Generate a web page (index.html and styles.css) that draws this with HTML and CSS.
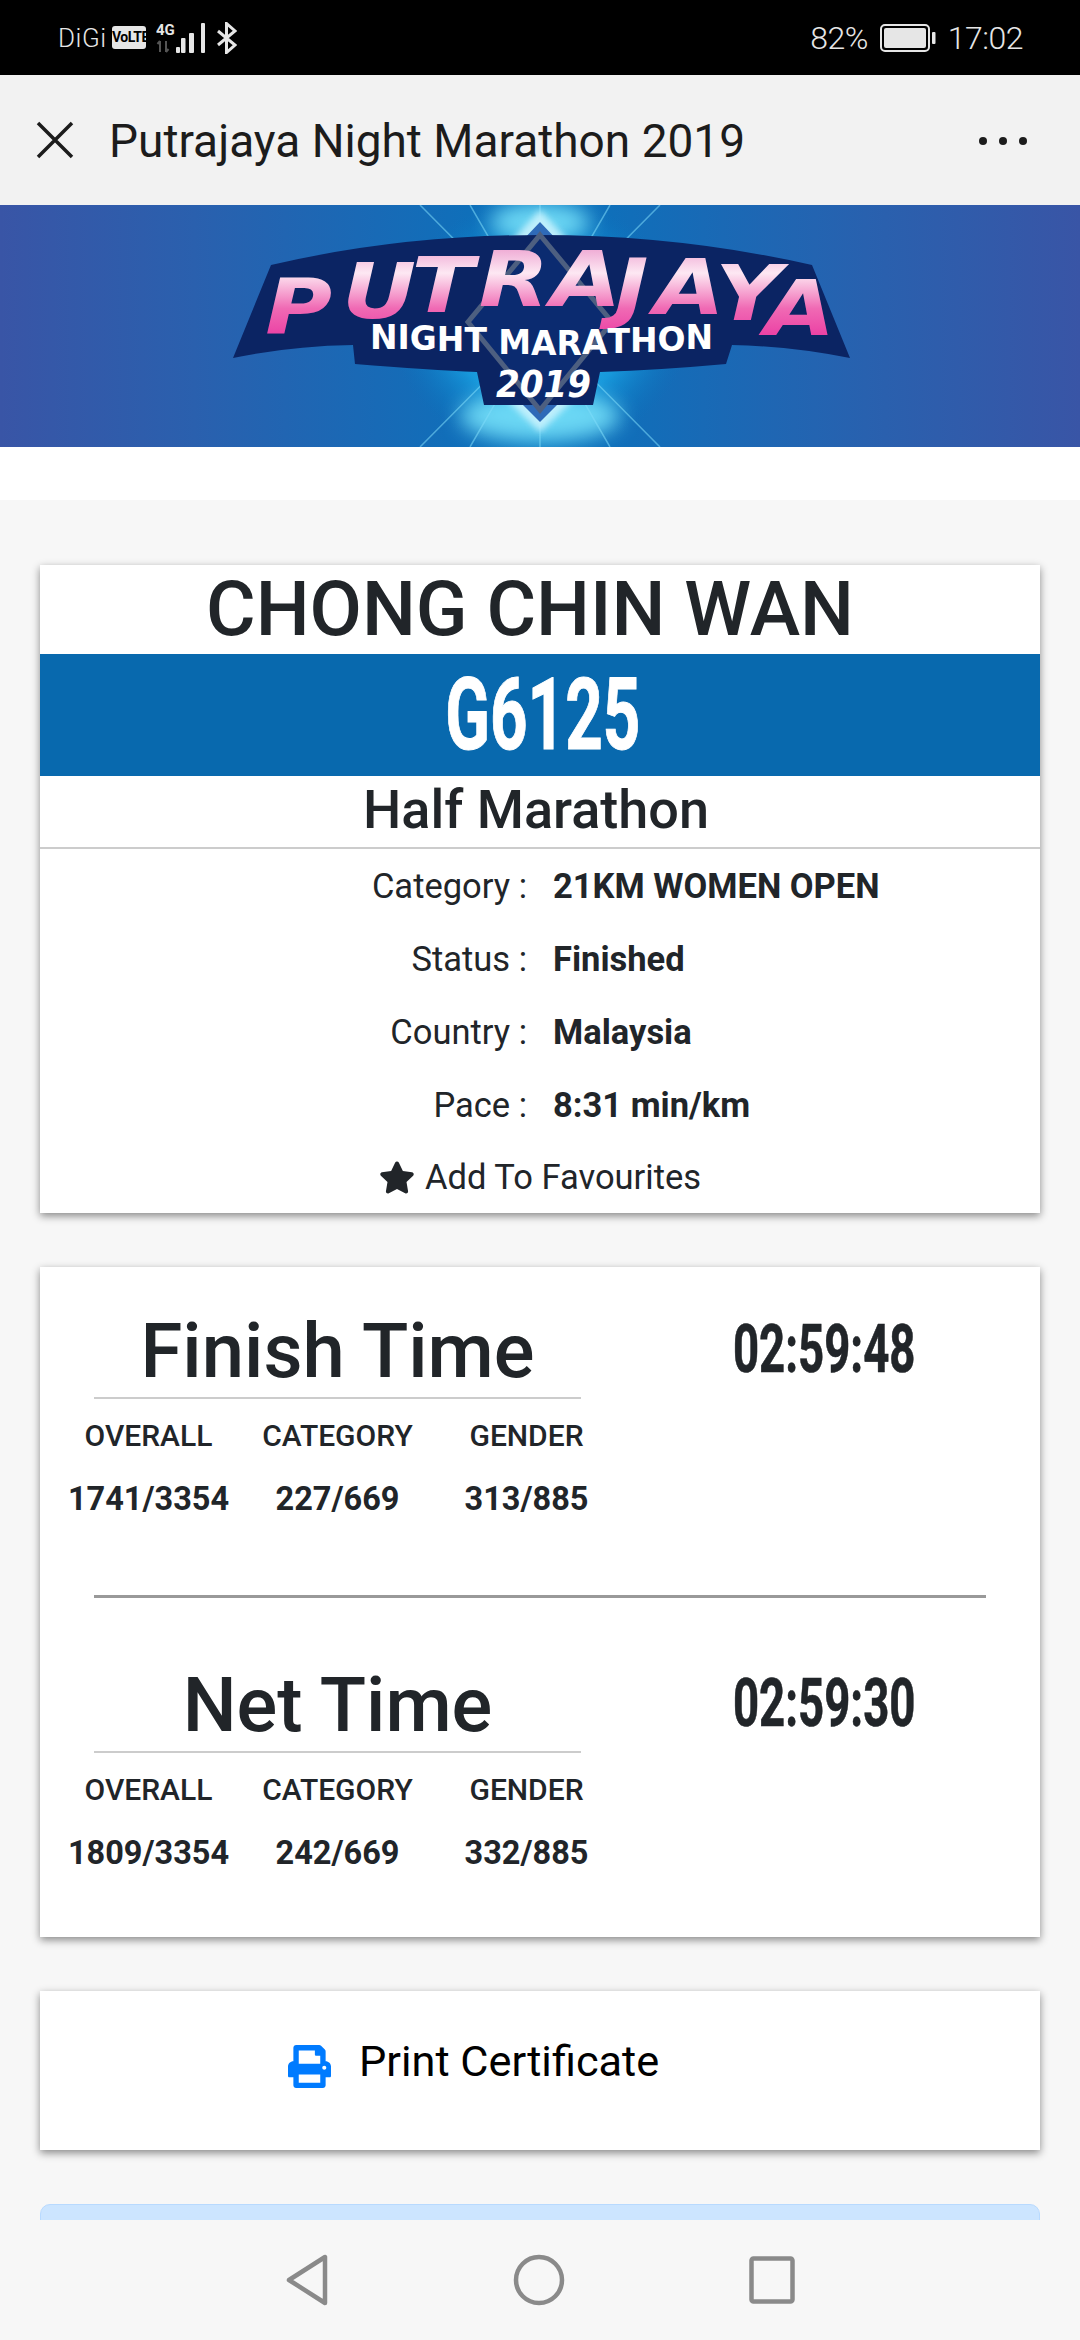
FILE: index.html
```html
<!DOCTYPE html>
<html lang="en">
<head>
<meta charset="utf-8">
<title>Putrajaya Night Marathon 2019</title>
<link rel="stylesheet" href="styles.css">
</head>
<body>
<div class="screen">
  <header class="status">
    <div class="status-left">
      <span class="carrier">DiGi</span>
      <span class="volte">VoLTE</span>
      <svg class="signal" width="50" height="32" viewBox="0 0 50 32">
        <text class="net-label" x="0" y="13">4G</text>
        <path class="net-arrows" d="M4 19v11M1.500 22l2.500-3M10 19v11M10 30l2.500-3"/>
        <rect class="bar" x="20" y="25" width="4" height="6" rx="1"/>
        <rect class="bar" x="25" y="16" width="4.500" height="15" rx="1"/>
        <rect class="bar" x="33" y="11" width="5" height="20" rx="1"/>
        <rect class="bar" x="45" y="1" width="4" height="30" rx="1"/>
      </svg>
      <svg class="bt" width="20" height="32" viewBox="0 0 20 32">
        <path class="bt-path" d="M1 9l17 14-8.500 7.500V1.500L18 9 1 23"/>
      </svg>
    </div>
    <div class="status-right">
      <span class="status-text">82%</span>
      <svg class="battery" width="56" height="28" viewBox="0 0 56 28">
        <rect class="batt-body" x="1" y="1" width="48" height="26" rx="4"/>
        <rect class="batt-fill" x="4" y="4" width="42" height="20" rx="2"/>
        <rect class="batt-tip" x="52" y="8" width="3.500" height="12" rx="1"/>
      </svg>
      <span class="status-text">17:02</span>
    </div>
  </header>

  <nav class="toolbar">
    <svg class="close" width="38" height="38" viewBox="0 0 38 38">
      <path class="close-path" d="M2 2l34 34M36 2L2 36"/>
    </svg>
    <h1 class="title">Putrajaya Night Marathon 2019</h1>
    <svg class="more" width="50" height="10" viewBox="0 0 50 10">
      <circle cx="5" cy="5" r="4"/><circle cx="25" cy="5" r="4"/><circle cx="45" cy="5" r="4"/>
    </svg>
  </nav>

  <svg class="banner" viewBox="0 205 1080 242" width="1080" height="242" preserveAspectRatio="none">
    <defs>
      <linearGradient id="bannerBg" x1="0" x2="1" y1="0" y2="0">
        <stop offset="0" stop-color="#3955a6"/>
        <stop offset="0.18" stop-color="#2a60ae"/>
        <stop offset="0.5" stop-color="#0873bd"/>
        <stop offset="0.82" stop-color="#2a60ae"/>
        <stop offset="1" stop-color="#3955a6"/>
      </linearGradient>
      <radialGradient id="glow" cx="0.5" cy="0.5" r="0.5">
        <stop offset="0" stop-color="#4ad6fa"/>
        <stop offset="0.6" stop-color="#1aa5e6" stop-opacity="0.75"/>
        <stop offset="1" stop-color="#0873bd" stop-opacity="0"/>
      </radialGradient>
      <linearGradient id="pink" x1="0" x2="0" y1="0" y2="1">
        <stop offset="0" stop-color="#e88ac4"/>
        <stop offset="0.32" stop-color="#fde8f3"/>
        <stop offset="0.62" stop-color="#f06ab4"/>
        <stop offset="1" stop-color="#e8279a"/>
      </linearGradient>
    </defs>
    <rect x="0" y="205" width="1080" height="242" fill="url(#bannerBg)"/>
    <ellipse cx="540" cy="326" rx="150" ry="128" fill="url(#glow)"/>
    <ellipse class="spark" cx="540" cy="416" rx="80" ry="26"/>
    <ellipse class="spark" cx="540" cy="222" rx="50" ry="20"/>
    <path class="ray" d="M420 205l240 242M660 205L420 447M470 205l140 242M610 205L470 447M540 205v242"/>
    <path class="halo" d="M540 210l48 52H492zM540 432l-52-50h104z"/>
    <path class="diamond-top" d="M540 222l36 38h-72zM540 422l-30-30h60z"/>
    <path class="plate" d="M233 358L271 265Q400 235 540 235T812 265L850 358Q790 346 732 345L726 364Q660 370 600 372L593 405H484L477 372Q430 370 355 364L353 345Q290 346 233 358Z"/>
    <path class="diamond-edge" d="M540 235L612 322 540 410 468 322Z"/>
    <text class="logo-main" transform="scale(1.2 1)" x="221 285 343 399 459 512 545 596 637" y="333 318 312 306 306 314 314 320 335">PUTRAJAYA</text>
    <text class="logo-sub" x="370" y="349 349 350 351 352 353 354 355 355 354 353 352 351 349" textLength="343" lengthAdjust="spacingAndGlyphs">NIGHT MARATHON</text>
    <text class="logo-year" x="496" y="397" textLength="95" lengthAdjust="spacingAndGlyphs">2019</text>
  </svg>
  <div class="spacer"></div>

  <main class="content">
    <section class="card profile">
      <h2 class="name">CHONG CHIN WAN</h2>
      <div class="bib"><span class="bib-text">G6125</span></div>
      <h3 class="race">Half Marathon</h3>
      <dl class="details">
        <dt class="label">Category :</dt><dd class="value">21KM WOMEN OPEN</dd>
        <dt class="label">Status :</dt><dd class="value">Finished</dd>
        <dt class="label">Country :</dt><dd class="value">Malaysia</dd>
        <dt class="label">Pace :</dt><dd class="value">8:31 min/km</dd>
      </dl>
      <div class="fav">
        <svg class="star" width="36" height="33" viewBox="0 0 576 512"><path d="M259.300 17.800L194 150.200 47.900 171.500c-26.200 3.800-36.700 36.100-17.700 54.600l105.700 103-25 145.500c-4.500 26.300 23.200 46 46.400 33.700L288 439.600l130.700 68.700c23.200 12.200 50.900-7.400 46.400-33.700l-25-145.500 105.700-103c19-18.500 8.500-50.800-17.700-54.600L382 150.200 316.700 17.800c-11.700-23.600-45.600-23.900-57.400 0z"/></svg>
        <span>Add To Favourites</span>
      </div>
    </section>

    <section class="card times">
      <div class="time-row">
        <div class="time-main">
          <div class="time-title">Finish Time</div>
          <div class="ranks">
            <span class="rank-head">OVERALL</span><span class="rank-head">CATEGORY</span><span class="rank-head">GENDER</span>
            <span class="rank-val">1741/3354</span><span class="rank-val">227/669</span><span class="rank-val">313/885</span>
          </div>
        </div>
        <div class="time-clock"><span class="clock-text">02:59:48</span></div>
      </div>
      <hr class="time-sep">
      <div class="time-row">
        <div class="time-main">
          <div class="time-title">Net Time</div>
          <div class="ranks">
            <span class="rank-head">OVERALL</span><span class="rank-head">CATEGORY</span><span class="rank-head">GENDER</span>
            <span class="rank-val">1809/3354</span><span class="rank-val">242/669</span><span class="rank-val">332/885</span>
          </div>
        </div>
        <div class="time-clock"><span class="clock-text">02:59:30</span></div>
      </div>
    </section>

    <section class="card print">
      <svg class="print-icon" width="43" height="43" viewBox="0 0 512 512"><path d="M448 192V77.250c0-8.490-3.370-16.620-9.370-22.630L393.370 9.370c-6-6-14.140-9.370-22.630-9.370H96C78.330 0 64 14.330 64 32v160c-35.350 0-64 28.650-64 64v112c0 8.840 7.160 16 16 16h48v96c0 17.670 14.330 32 32 32h320c17.670 0 32-14.330 32-32v-96h48c8.840 0 16-7.160 16-16V256c0-35.350-28.650-64-64-64zm-64 256H128v-96h256v96zm0-224H128V64h192v48c0 8.840 7.160 16 16 16h48v96zm48 72c-13.250 0-24-10.750-24-24 0-13.260 10.750-24 24-24s24 10.740 24 24c0 13.250-10.750 24-24 24z"/></svg>
      <span class="print-text">Print Certificate</span>
    </section>

    <div class="alert"></div>
  </main>

  <footer class="navbar">
    <svg class="nav-icon" width="44" height="52" viewBox="0 0 44 52"><path d="M40 3v46L4 26z"/></svg>
    <svg class="nav-icon" width="52" height="52" viewBox="0 0 52 52"><circle cx="26" cy="26" r="23"/></svg>
    <svg class="nav-icon" width="46" height="48" viewBox="0 0 46 48"><rect x="2.500" y="2.500" width="41" height="43" rx="2"/></svg>
  </footer>
</div>
</body>
</html>
```
FILE: styles.css
```css
* { box-sizing: border-box; }
html, body { margin: 0; padding: 0; }
body { font-family: Roboto, "Noto Sans", sans-serif; color: #212529; background: #f7f7f7; }
.screen { width: 1080px; height: 2340px; display: flex; flex-direction: column; overflow: hidden; }

.status { flex: 0 0 75px; background: #000; color: #e6e6e6; display: flex; justify-content: space-between; align-items: center; padding: 0 57px 0 58px; }
.status-left, .status-right { display: flex; align-items: center; }
.carrier { font-size: 26px; font-weight: 300; width: 54px; letter-spacing: 0.5px; }
.volte { background: #e6e6e6; color: #000; border-radius: 3px; font: 700 14px/23px "Liberation Sans Narrow", Roboto, sans-serif; width: 34px; text-align: center; letter-spacing: -0.5px; }
.signal { margin-left: 10px; }
.net-label { font: 700 15px "Liberation Sans Narrow", Roboto, sans-serif; fill: #e6e6e6; }
.net-arrows { stroke: #555; stroke-width: 2; fill: none; }
.bar { fill: #e6e6e6; }
.bt { margin-left: 11px; }
.bt-path { fill: none; stroke: #e6e6e6; stroke-width: 3; }
.status-text { font-size: 32px; font-weight: 300; letter-spacing: -0.5px; }
.battery { margin: 0 12px 0 12px; }
.batt-body { fill: none; stroke: #e6e6e6; stroke-width: 2; }
.batt-fill, .batt-tip { fill: #e6e6e6; }

.toolbar { flex: 0 0 130px; background: #f2f2f2; display: flex; align-items: center; padding: 0 52px 0 36px; }
.close-path { fill: none; stroke: #1c1c1c; stroke-width: 3.500; }
.title { font-size: 46px; font-weight: 400; margin: 2px 0 0 35px; flex: 1; color: #1c1c1c; line-height: 1; }
.more { fill: #1c1c1c; margin-top: 2px; }

.banner { flex: 0 0 242px; display: block; }
.spark { fill: #7be6fc; opacity: 0.85; filter: blur(10px); }
.ray { stroke: #7fdcfa; stroke-width: 1.500; fill: none; opacity: 0.55; }
.halo { fill: #c8f2fd; opacity: 0.9; filter: blur(3px); }
.diamond-top { fill: #2f6ab8; }
.plate { fill: #0b2463; }
.diamond-edge { fill: #0b2b70; stroke: #4d5f80; stroke-width: 5; }
.logo-main { font: oblique 700 76px "DejaVu Sans", "Liberation Sans", sans-serif; fill: url(#pink); }
.logo-sub { font: 700 33px "DejaVu Sans", "Liberation Sans", sans-serif; fill: #fff; }
.logo-year { font: oblique 700 38px "DejaVu Sans", "Liberation Sans", sans-serif; fill: #fff; }

.spacer { flex: 0 0 53px; background: #fff; }

.content { flex: 1; min-height: 0; overflow: hidden; padding: 65px 40px 0; background: #f7f7f7; }
.card { background: #fff; box-shadow: 0 3px 8px rgba(0, 0, 0, 0.45); margin-bottom: 54px; }

.profile { height: 648px; display: flex; flex-direction: column; }
.name { flex: 0 0 89px; margin: 0; padding-right: 20px; font-size: 76px; font-weight: 500; line-height: 89px; text-align: center; }
.bib { flex: 0 0 122px; background: #0869ae; display: flex; align-items: center; justify-content: center; padding-left: 6px; }
.bib-text { color: #fff; font: 700 100px/122px "Liberation Sans Narrow", Roboto, sans-serif; display: inline-block; transform: scaleX(0.655); -webkit-text-stroke: 1px #fff; }
.race { flex: 0 0 73px; margin: 0; padding-right: 8px; font-size: 54px; font-weight: 500; line-height: 67px; text-align: center; border-bottom: 2px solid #ccc; }
.details { margin: 0; display: grid; grid-template-columns: 487px 1fr; column-gap: 26px; grid-auto-rows: 73px; font-size: 34.500px; align-items: center; }
.label { text-align: right; font-weight: 400; }
.value { margin: 0; font-weight: 700; }
.fav { display: flex; align-items: center; justify-content: center; font-size: 34.500px; gap: 10px; height: 72px; }
.star { fill: #212529; }

.times { height: 670px; padding-top: 54px; }
.time-row { display: flex; padding: 0 12px 0 14px; }
.time-main { flex: 0 0 566px; }
.time-title { margin: 0 40px; height: 78px; font-size: 76px; font-weight: 500; line-height: 60px; text-align: center; border-bottom: 2px solid #ccc; }
.ranks { display: grid; grid-template-columns: repeat(3, 189px); grid-auto-rows: 63px; justify-items: center; align-items: center; padding-top: 5px; }
.rank-head { font-size: 30px; font-weight: 500; }
.rank-val { font-size: 32.500px; font-weight: 700; }
.time-clock { flex: 1; text-align: center; height: 58px; }
.clock-text { font: 700 66px/58px "Liberation Sans Narrow", Roboto, sans-serif; display: inline-block; transform: scaleX(0.69); -webkit-text-stroke: 0.6px #212529; }
.time-sep { margin: 65px 54px 77px; border: 0; height: 3px; background: #999; }

.print { height: 159px; display: flex; align-items: flex-start; padding: 54px 0 0 248px; gap: 28px; }
.print-icon { fill: #007bff; }
.print-text { font-size: 43.300px; color: #000; line-height: 34px; }

.alert { height: 60px; background: #cce5ff; border: 1px solid #b8daff; border-radius: 10px; }

.navbar { flex: 0 0 120px; background: #f7f7f7; display: flex; align-items: center; justify-content: center; }
.nav-icon { margin: 0 92px; fill: none; stroke: #8a8a8a; stroke-width: 4.500; stroke-linejoin: round; }
```
